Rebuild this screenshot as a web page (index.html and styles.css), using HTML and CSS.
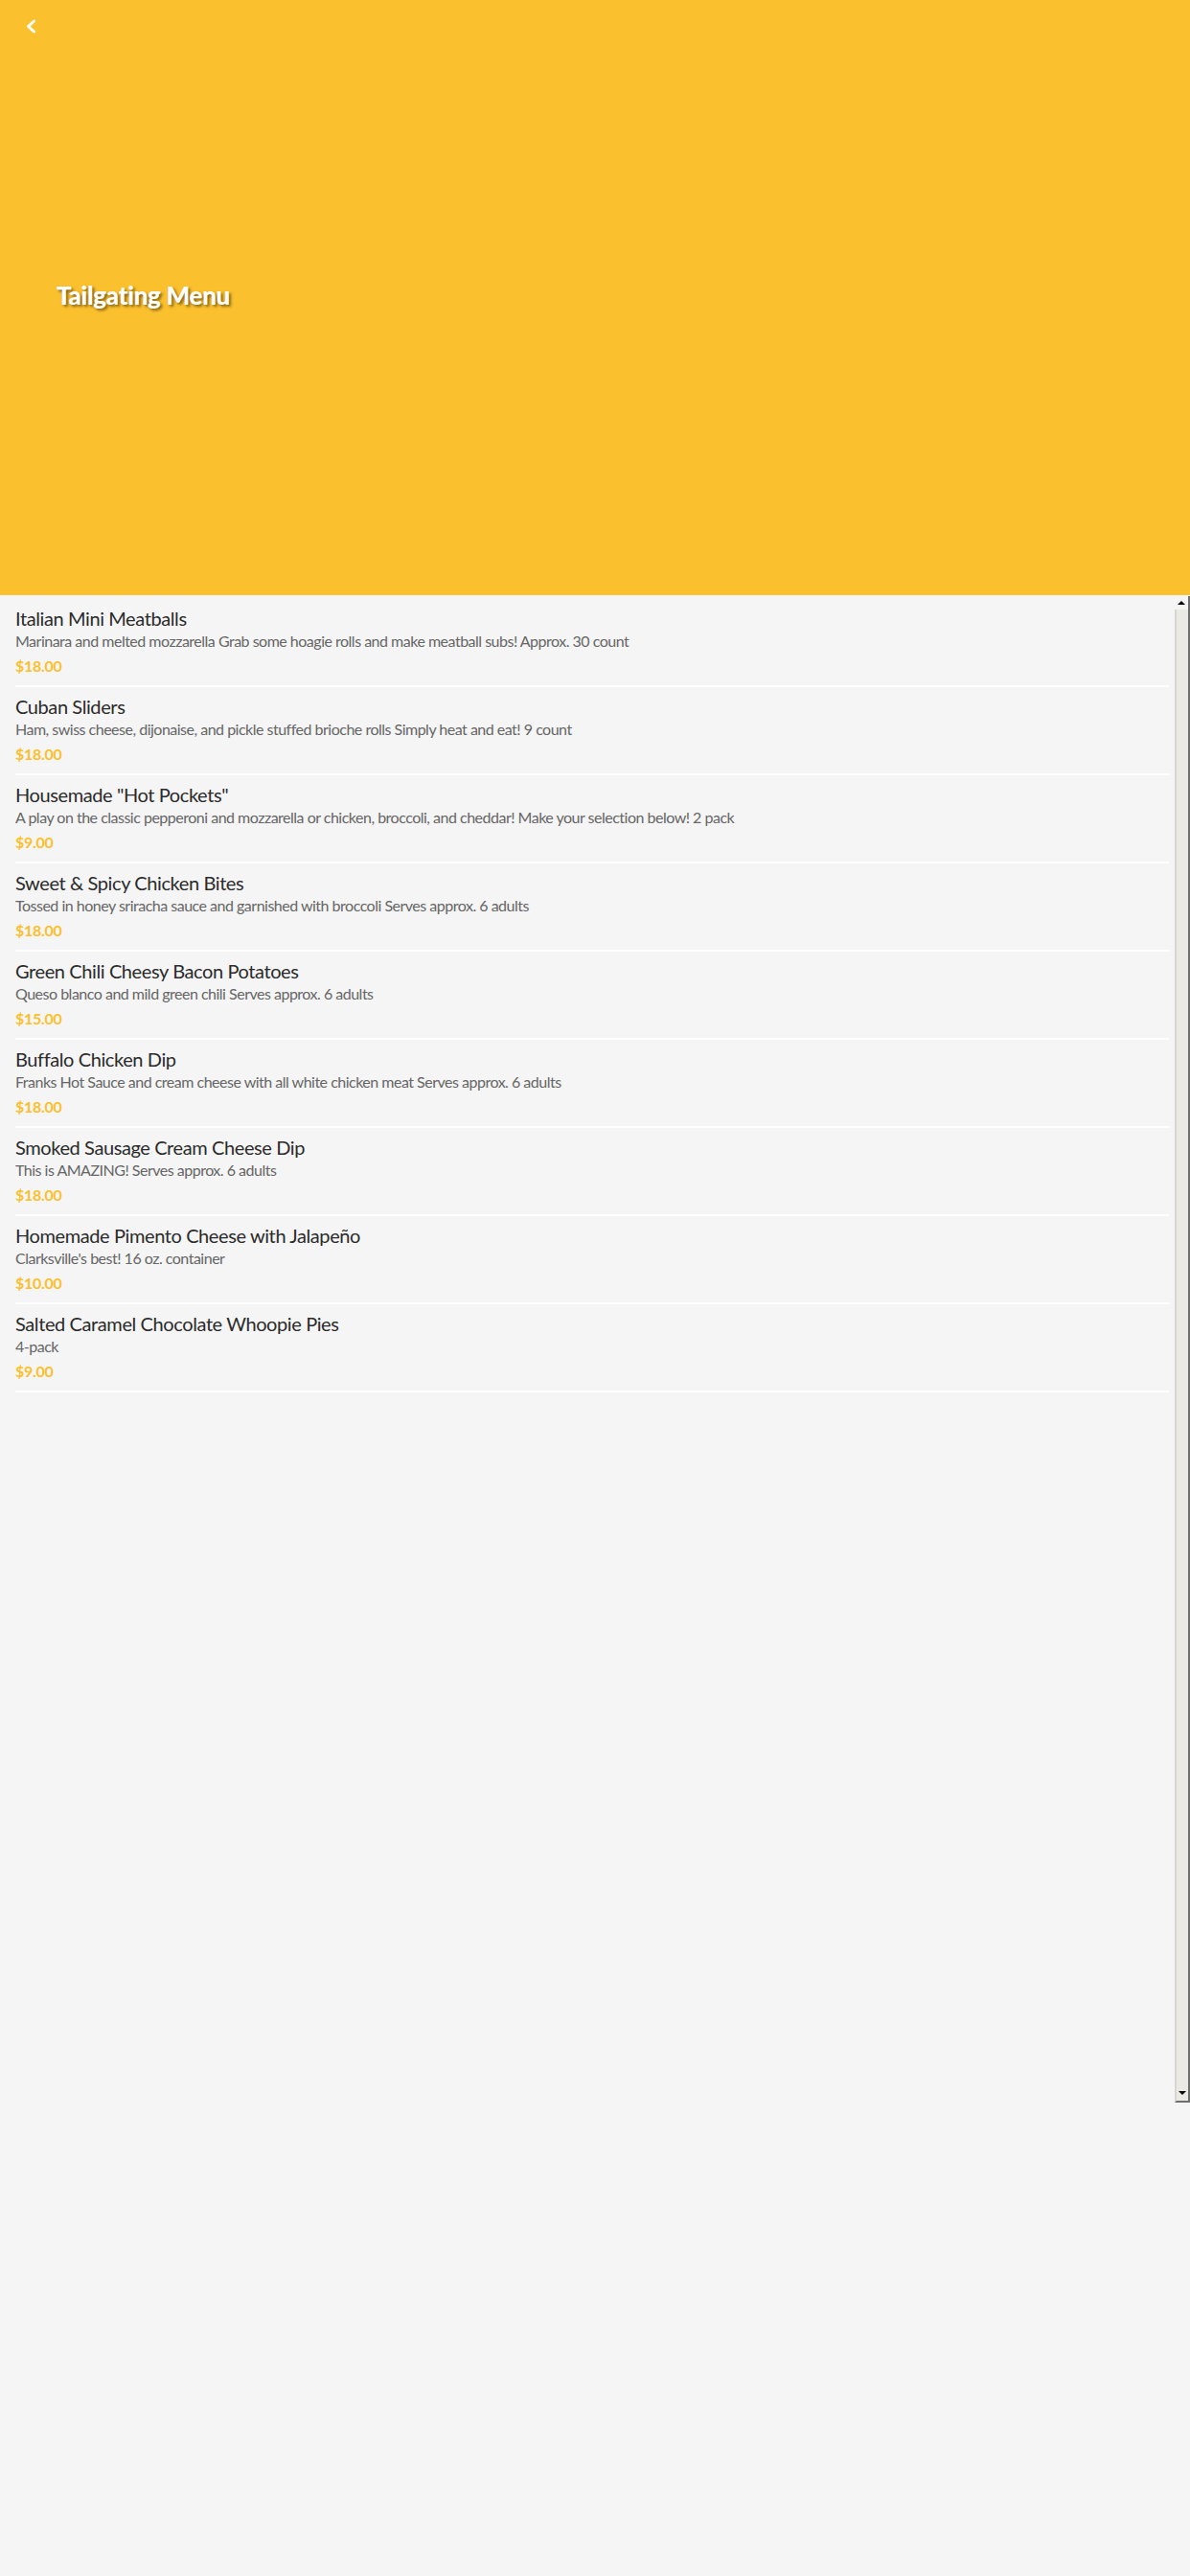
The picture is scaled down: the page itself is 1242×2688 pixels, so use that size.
FILE: index.html
```html
<!DOCTYPE html>
<html lang="en">
<head>
    <meta charset="UTF-8">
    <meta name="viewport" content="width=device-width, initial-scale=1.0">
    <title>Tailgating Menu</title>
    <link rel="stylesheet" href="styles.css">
</head>
<body>
    <header class="hero">
        <a class="back" href="#">
            <svg width="11" height="15" viewBox="0 0 11 15">
                <polyline points="8.5,2 2.5,7.5 8.5,13" fill="none" stroke="#fff" stroke-width="3" stroke-linecap="round" stroke-linejoin="round"/>
            </svg>
        </a>
        <h1 class="hero-title">Tailgating Menu</h1>
    </header>

    <div class="menu">
        <ul class="items">
            <li class="item">
                <h2 class="item-name">Italian Mini Meatballs</h2>
                <p class="item-desc">Marinara and melted mozzarella Grab some hoagie rolls and make meatball subs! Approx. 30 count</p>
                <p class="item-price">$18.00</p>
            </li>
            <li class="item">
                <h2 class="item-name">Cuban Sliders</h2>
                <p class="item-desc">Ham, swiss cheese, dijonaise, and pickle stuffed brioche rolls Simply heat and eat! 9 count</p>
                <p class="item-price">$18.00</p>
            </li>
            <li class="item">
                <h2 class="item-name">Housemade "Hot Pockets"</h2>
                <p class="item-desc">A play on the classic pepperoni and mozzarella or chicken, broccoli, and cheddar! Make your selection below! 2 pack</p>
                <p class="item-price">$9.00</p>
            </li>
            <li class="item">
                <h2 class="item-name">Sweet &amp; Spicy Chicken Bites</h2>
                <p class="item-desc">Tossed in honey sriracha sauce and garnished with broccoli Serves approx. 6 adults</p>
                <p class="item-price">$18.00</p>
            </li>
            <li class="item">
                <h2 class="item-name">Green Chili Cheesy Bacon Potatoes</h2>
                <p class="item-desc">Queso blanco and mild green chili Serves approx. 6 adults</p>
                <p class="item-price">$15.00</p>
            </li>
            <li class="item">
                <h2 class="item-name">Buffalo Chicken Dip</h2>
                <p class="item-desc">Franks Hot Sauce and cream cheese with all white chicken meat Serves approx. 6 adults</p>
                <p class="item-price">$18.00</p>
            </li>
            <li class="item">
                <h2 class="item-name">Smoked Sausage Cream Cheese Dip</h2>
                <p class="item-desc">This is AMAZING! Serves approx. 6 adults</p>
                <p class="item-price">$18.00</p>
            </li>
            <li class="item">
                <h2 class="item-name">Homemade Pimento Cheese with Jalapeño</h2>
                <p class="item-desc">Clarksville's best! 16 oz. container</p>
                <p class="item-price">$10.00</p>
            </li>
            <li class="item">
                <h2 class="item-name">Salted Caramel Chocolate Whoopie Pies</h2>
                <p class="item-desc">4-pack</p>
                <p class="item-price">$9.00</p>
            </li>
        </ul>

        <div class="scrollbar">
            <div class="scroll-btn"><span class="arrow-up"></span></div>
            <div class="scroll-thumb"><span class="arrow-down"></span></div>
        </div>
    </div>
</body>
</html>
```

FILE: styles.css
```css
body {
    margin: 0;
    background-color: #f5f5f5;
    font-family: Lato, "Open Sans", sans-serif;
}

/* yellow banner */
.hero {
    height: 621px;
    background-color: #fbc02d;
    display: grid;
}
.back,
.hero-title {
    grid-area: 1 / 1;
}
.back {
    align-self: start;
    justify-self: start;
    display: block;
    width: 11px;
    height: 15px;
    margin: 20px 0 0 27px;
}
.back svg {
    display: block;
}
.hero-title {
    align-self: center;
    margin: 0 0 6px 59px;
    color: #fff;
    font-size: 26px;
    font-weight: 900;
    letter-spacing: -0.3px;
    text-shadow: 2px 2px 3px rgba(0, 0, 0, 0.5);
}

/* item list */
.menu {
    display: flex;
    height: 1573px;
}
.items {
    flex: 1;
    list-style: none;
    margin: 0;
    padding: 4px 6px 0 16px;
}
.item {
    padding: 8px 0 11px;
    border-bottom: 2px solid #fff;
}
.item-name {
    margin: 0;
    font-size: 20px;
    font-weight: 400;
    line-height: 24px;
    letter-spacing: -0.4px;
    color: #2b2b2b;
}
.item-desc {
    margin: 2px 0 0;
    font-size: 16px;
    line-height: 19px;
    letter-spacing: -0.5px;
    color: #666;
}
.item-price {
    margin: 7px 0 0;
    font-size: 16px;
    font-weight: 700;
    line-height: 19px;
    letter-spacing: -0.3px;
    color: #fbc02d;
}

/* classic scrollbar */
.scrollbar {
    width: 16px;
    display: flex;
    flex-direction: column;
    padding-top: 1px;
}
.scroll-btn {
    height: 14px;
    display: flex;
    justify-content: center;
    align-items: center;
    background-color: #f5f5f5;
    border-right: 2px solid #6e6e6e;
    box-sizing: border-box;
}
.scroll-thumb {
    flex: 1;
    display: flex;
    justify-content: center;
    align-items: flex-end;
    padding-bottom: 6px;
    background-color: #ebe9e4;
    border-left: 2px solid #d8d6d0;
    border-right: 2px solid #6e6e6e;
    border-bottom: 2px solid #6e6e6e;
}
.arrow-up {
    width: 0;
    height: 0;
    border-left: 4px solid transparent;
    border-right: 4px solid transparent;
    border-bottom: 4px solid #000;
}
.arrow-down {
    width: 0;
    height: 0;
    border-left: 4px solid transparent;
    border-right: 4px solid transparent;
    border-top: 4px solid #000;
}
```
